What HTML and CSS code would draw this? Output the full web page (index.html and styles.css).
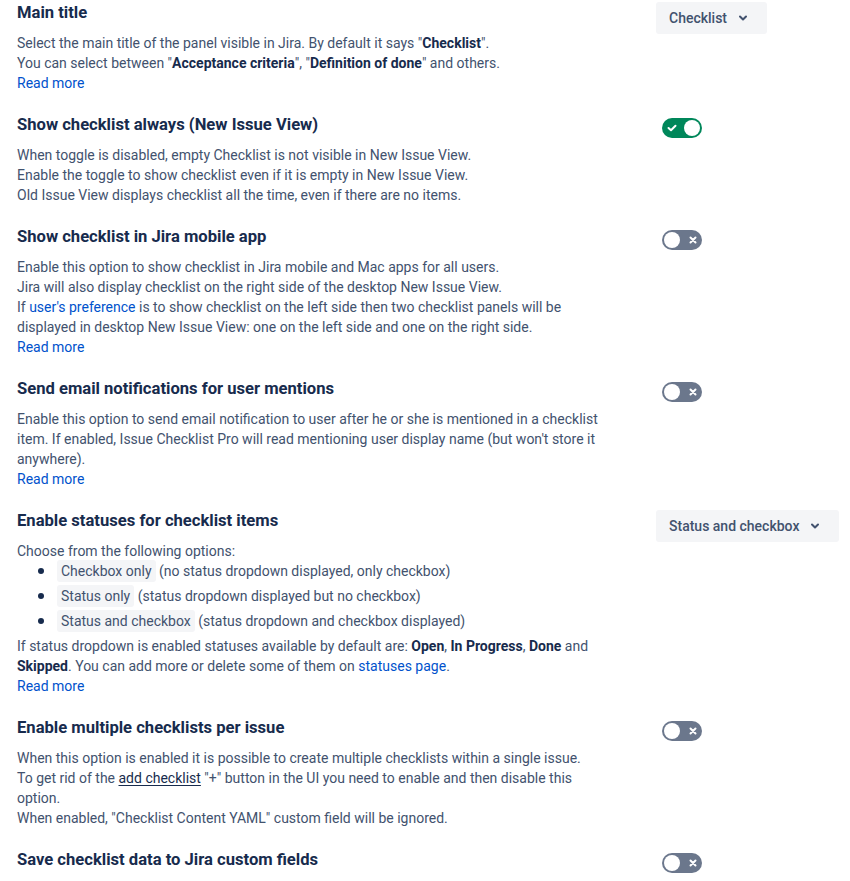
FILE: index.html
```html
<!DOCTYPE html>
<html lang="en">
<head>
<meta charset="utf-8">
<title>Checklist settings</title>
<link rel="stylesheet" href="styles.css">
</head>
<body>
<div class="settings">

  <section class="setting">
    <div class="setting-main">
      <h3 class="setting-title">Main title</h3>
      <div class="desc">
        <p>Select the main title of the panel visible in Jira. By default it says "<b>Checklist</b>".<br>You can select between "<b>Acceptance criteria</b>", "<b>Definition of done</b>" and others.</p>
        <a class="link" href="#">Read more</a>
      </div>
    </div>
    <div class="setting-control">
      <button class="select">Checklist<span class="chev"><svg width="8" height="6" viewBox="0 0 8 6"><path d="M1 1.5 L4 4.5 L7 1.5" fill="none" stroke="#42526E" stroke-width="2" stroke-linecap="round" stroke-linejoin="round"/></svg></span></button>
    </div>
  </section>

  <section class="setting">
    <div class="setting-main">
      <h3 class="setting-title">Show checklist always (New Issue View)</h3>
      <div class="desc">
        <p>When toggle is disabled, empty Checklist is not visible in New Issue View.<br>Enable the toggle to show checklist even if it is empty in New Issue View.<br>Old Issue View displays checklist all the time, even if there are no items.</p>
      </div>
    </div>
    <div class="setting-control">
      <span class="toggle on"><svg class="ico" width="10" height="8" viewBox="0 0 10 8"><path d="M1.5 4 L4 6.3 L8.5 1.7" fill="none" stroke="#fff" stroke-width="2" stroke-linecap="round" stroke-linejoin="round"/></svg><span class="knob"></span></span>
    </div>
  </section>

  <section class="setting">
    <div class="setting-main">
      <h3 class="setting-title">Show checklist in Jira mobile app</h3>
      <div class="desc">
        <p>Enable this option to show checklist in Jira mobile and Mac apps for all users.<br>Jira will also display checklist on the right side of the desktop New Issue View.<br>If <a class="link" href="#">user's preference</a> is to show checklist on the left side then two checklist panels will be displayed in desktop New Issue View: one on the left side and one on the right side.</p>
        <a class="link" href="#">Read more</a>
      </div>
    </div>
    <div class="setting-control">
      <span class="toggle off"><span class="knob"></span><svg class="ico" width="8" height="8" viewBox="0 0 8 8"><path d="M1.5 1.5 L6.5 6.5 M6.5 1.5 L1.5 6.5" fill="none" stroke="#fff" stroke-width="2" stroke-linecap="round"/></svg></span>
    </div>
  </section>

  <section class="setting">
    <div class="setting-main">
      <h3 class="setting-title">Send email notifications for user mentions</h3>
      <div class="desc">
        <p>Enable this option to send email notification to user after he or she is mentioned in a checklist item. If enabled, Issue Checklist Pro will read mentioning user display name (but won't store it anywhere).</p>
        <a class="link" href="#">Read more</a>
      </div>
    </div>
    <div class="setting-control">
      <span class="toggle off"><span class="knob"></span><svg class="ico" width="8" height="8" viewBox="0 0 8 8"><path d="M1.5 1.5 L6.5 6.5 M6.5 1.5 L1.5 6.5" fill="none" stroke="#fff" stroke-width="2" stroke-linecap="round"/></svg></span>
    </div>
  </section>

  <section class="setting">
    <div class="setting-main">
      <h3 class="setting-title">Enable statuses for checklist items</h3>
      <div class="desc">
        <p>Choose from the following options:</p>
        <ul class="options">
          <li><span class="tag">Checkbox only</span> (no status dropdown displayed, only checkbox)</li>
          <li><span class="tag">Status only</span> (status dropdown displayed but no checkbox)</li>
          <li><span class="tag">Status and checkbox</span> (status dropdown and checkbox displayed)</li>
        </ul>
        <p class="after-list">If status dropdown is enabled statuses available by default are: <b>Open</b>, <b>In Progress</b>, <b>Done</b> and <b>Skipped</b>. You can add more or delete some of them on <a class="link" href="#">statuses page</a>.</p>
        <a class="link" href="#">Read more</a>
      </div>
    </div>
    <div class="setting-control">
      <button class="select">Status and checkbox<span class="chev"><svg width="8" height="6" viewBox="0 0 8 6"><path d="M1 1.5 L4 4.5 L7 1.5" fill="none" stroke="#42526E" stroke-width="2" stroke-linecap="round" stroke-linejoin="round"/></svg></span></button>
    </div>
  </section>

  <section class="setting">
    <div class="setting-main">
      <h3 class="setting-title">Enable multiple checklists per issue</h3>
      <div class="desc">
        <p>When this option is enabled it is possible to create multiple checklists within a single issue.<br>To get rid of the <span class="ul">add checklist</span> "+" button in the UI you need to enable and then disable this option.<br>When enabled, "Checklist Content YAML" custom field will be ignored.</p>
      </div>
    </div>
    <div class="setting-control">
      <span class="toggle off"><span class="knob"></span><svg class="ico" width="8" height="8" viewBox="0 0 8 8"><path d="M1.5 1.5 L6.5 6.5 M6.5 1.5 L1.5 6.5" fill="none" stroke="#fff" stroke-width="2" stroke-linecap="round"/></svg></span>
    </div>
  </section>

  <section class="setting">
    <div class="setting-main">
      <h3 class="setting-title">Save checklist data to Jira custom fields</h3>
    </div>
    <div class="setting-control">
      <span class="toggle off"><span class="knob"></span><svg class="ico" width="8" height="8" viewBox="0 0 8 8"><path d="M1.5 1.5 L6.5 6.5 M6.5 1.5 L1.5 6.5" fill="none" stroke="#fff" stroke-width="2" stroke-linecap="round"/></svg></span>
    </div>
  </section>

</div>
</body>
</html>
```
FILE: styles.css
```css
html, body {
  margin: 0;
  padding: 0;
  background: #ffffff;
}

body {
  font-family: Roboto, "Liberation Sans", sans-serif;
  font-size: 14px;
  line-height: 20px;
  color: #42526E;
}

.settings {
  padding: 2px 0 0 17px;
  display: flex;
  flex-direction: column;
  gap: 21px;
}

.setting {
  display: grid;
  grid-template-columns: 639px auto;
  align-items: start;
}

.setting-title {
  margin: 0;
  font-size: 16.6px;
  line-height: 22px;
  font-weight: 700;
  color: #172B4D;
}

.desc {
  margin-top: 9px;
  max-width: 590px;
}

.desc p {
  margin: 0;
}

.desc b {
  font-weight: 700;
  color: #172B4D;
}

.link {
  color: #0052CC;
  text-decoration: none;
}

.ul {
  color: #172B4D;
  text-decoration: underline;
  text-underline-offset: 2px;
}

.options {
  margin: 0;
  padding-left: 40px;
  list-style: none;
  color: #42526E;
}

.options li {
  line-height: 20px;
}

.options li + li {
  margin-top: 5px;
}

.options li::before {
  content: "";
  display: inline-block;
  width: 6px;
  height: 6px;
  border-radius: 50%;
  background: #172B4D;
  vertical-align: 2px;
  margin-left: -19px;
  margin-right: 13px;
}

.tag {
  background: #F4F5F7;
  border-radius: 3px;
  padding: 3px 4px;
}

.after-list {
  margin-top: 5px !important;
}

.select {
  display: inline-flex;
  align-items: center;
  height: 32px;
  padding: 0 12px 0 13px;
  border: none;
  border-radius: 3px;
  background: #F4F5F7;
  font-family: Roboto, "Liberation Sans", sans-serif;
  font-size: 14px;
  font-weight: 500;
  color: #42526E;
  cursor: pointer;
}

.chev {
  display: inline-flex;
  align-items: center;
  justify-content: center;
  width: 24px;
  height: 24px;
  margin-left: 4px;
}

.toggle {
  display: flex;
  align-items: center;
  justify-content: space-between;
  box-sizing: border-box;
  width: 40px;
  height: 20px;
  margin: 4px 0 0 6px;
  padding: 0 2px 0 2px;
  border-radius: 10px;
}

.toggle.on {
  background: #00875A;
  padding-left: 5px;
}

.toggle.off {
  background: #6B778C;
  padding-right: 5px;
}

.knob {
  width: 16px;
  height: 16px;
  border-radius: 50%;
  background: #ffffff;
}

.ico {
  display: block;
}
```
